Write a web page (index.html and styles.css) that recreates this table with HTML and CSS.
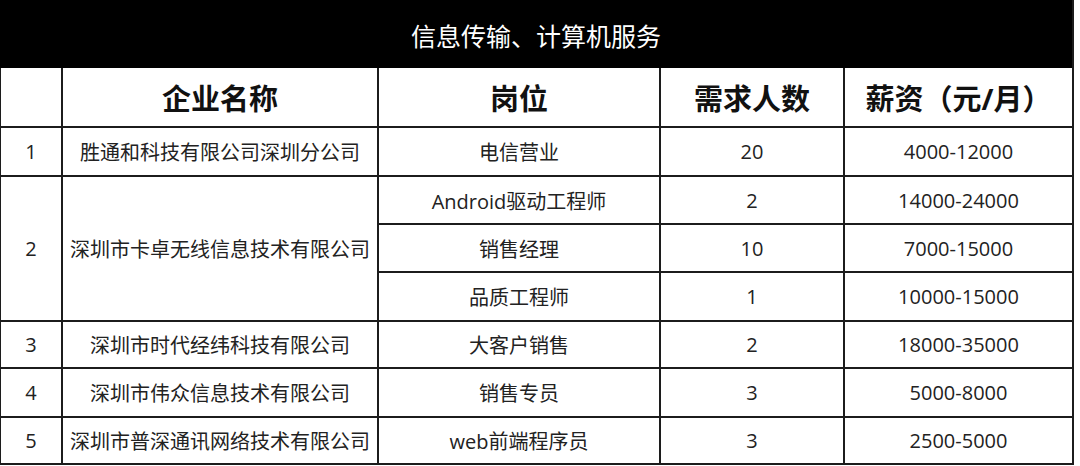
FILE: index.html
```html
<!DOCTYPE html>
<html lang="zh-CN">
<head>
<meta charset="utf-8">
<title>信息传输、计算机服务</title>
<link rel="stylesheet" href="styles.css">
</head>
<body>
<div class="sheet">
  <div class="title">信息传输、计算机服务</div>

  <div class="cell head"></div>
  <div class="cell head">企业名称</div>
  <div class="cell head">岗位</div>
  <div class="cell head">需求人数</div>
  <div class="cell head">薪资（元/月）</div>

  <div class="cell r1">1</div>
  <div class="cell r1">胜通和科技有限公司深圳分公司</div>
  <div class="cell r1">电信营业</div>
  <div class="cell r1">20</div>
  <div class="cell r1">4000-12000</div>

  <div class="cell span3">2</div>
  <div class="cell span3">深圳市卡卓无线信息技术有限公司</div>
  <div class="cell r2a">Android驱动工程师</div>
  <div class="cell r2a">2</div>
  <div class="cell r2a">14000-24000</div>
  <div class="cell r2b">销售经理</div>
  <div class="cell r2b">10</div>
  <div class="cell r2b">7000-15000</div>
  <div class="cell r2c">品质工程师</div>
  <div class="cell r2c">1</div>
  <div class="cell r2c">10000-15000</div>

  <div class="cell r3">3</div>
  <div class="cell r3">深圳市时代经纬科技有限公司</div>
  <div class="cell r3">大客户销售</div>
  <div class="cell r3">2</div>
  <div class="cell r3">18000-35000</div>

  <div class="cell r4">4</div>
  <div class="cell r4">深圳市伟众信息技术有限公司</div>
  <div class="cell r4">销售专员</div>
  <div class="cell r4">3</div>
  <div class="cell r4">5000-8000</div>

  <div class="cell r5">5</div>
  <div class="cell r5">深圳市普深通讯网络技术有限公司</div>
  <div class="cell r5">web前端程序员</div>
  <div class="cell r5">3</div>
  <div class="cell r5">2500-5000</div>
</div>
</body>
</html>
```

FILE: styles.css
```css
html, body {
  margin: 0;
  padding: 0;
  background: #ffffff;
}

body {
  width: 1080px;
  height: 466px;
  overflow: hidden;
  font-family: "Open Sans", "Noto Sans CJK SC", sans-serif;
}

.sheet {
  display: grid;
  width: 1071px;
  grid-template-columns: 60px 314px 280px 182px 227px;
  grid-template-rows: 66px 58px 47px 46px 46px 47px 45px 47px 45px;
  gap: 2px;
  padding: 0 2px 2px 1px;
  background: #1c1c1c;
}

.title {
  grid-column: 1 / -1;
  background: #000000;
  color: #ffffff;
  font-size: 25px;
  display: flex;
  align-items: center;
  justify-content: center;
  padding-top: 2px;
  margin: 0 0 -2px -1px;
}

.cell {
  background: #ffffff;
  display: flex;
  align-items: center;
  justify-content: center;
  font-size: 20px;
  color: #222222;
  white-space: nowrap;
}

.head {
  font-size: 29px;
  font-weight: 700;
  color: #111111;
}

.span3 {
  grid-row: span 3;
}
```
